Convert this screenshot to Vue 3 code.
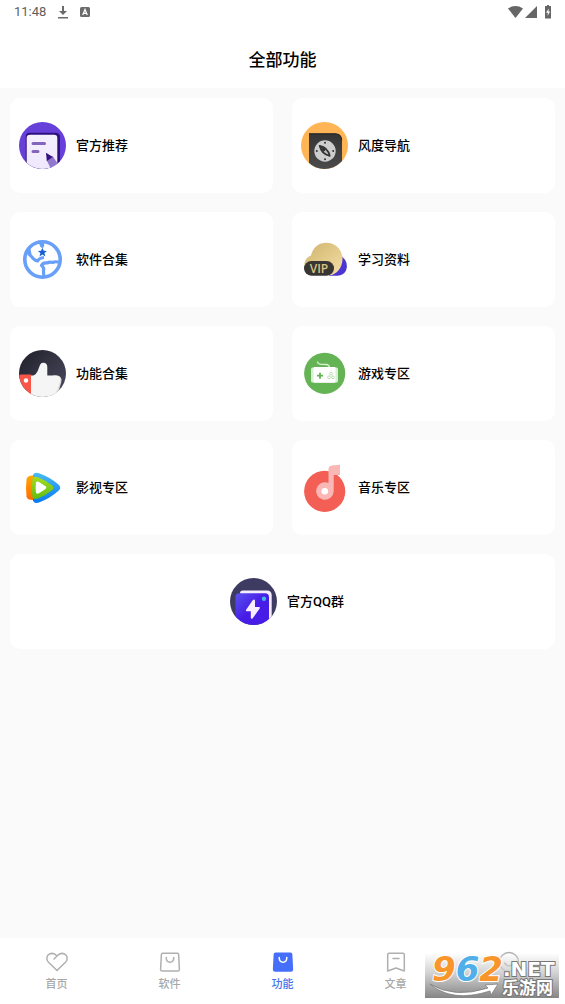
<template>
  <div class="page">
    <header class="header">
      <div class="status-bar">
        <div class="status-left">
          <span class="status-time">11:48</span>
          <svg class="status-icon" viewBox="0 0 12 14" width="12" height="14">
            <path d="M5 1h2v5h3L6 10 2 6h3z M1 12h10v1.5H1z" fill="#6b6b6b" />
          </svg>
          <svg class="status-icon" viewBox="0 0 10 10" width="10" height="10">
            <rect width="10" height="10" rx="1.5" fill="#6b6b6b" />
            <path d="M2.7 8 5 2.4 7.3 8M3.6 6.3h2.8" fill="none" stroke="#fff" stroke-width="1.2" />
          </svg>
        </div>
        <svg viewBox="0 0 44 14" width="44" height="14">
          <path d="M0 3.4Q7.5-1.4 15 3.4L7.5 13z" fill="#666" />
          <path d="M29 1v12H17z" fill="#666" />
          <path d="M37 1h2V0h2v1h2v12.5h-6V1z" fill="#666" />
          <path d="M40.800 3.500l-2.800 4.200h2l-.6 3.300 2.800-4.400h-1.800z" fill="#fff" />
        </svg>
      </div>
      <h1 class="title">全部功能</h1>
    </header>

    <main class="feature-grid">
      <button
        v-for="item in features"
        :key="item.icon"
        type="button"
        class="feature-card"
        :class="{ wide: item.wide }"
      >
        <svg v-if="item.icon === 'recommend'" class="feature-icon" viewBox="0 0 47 47">
          <defs>
            <clipPath id="round"><circle cx="23.5" cy="23.5" r="23.5" /></clipPath>
            <linearGradient id="note" x1="0" y1="0" x2="0" y2="1">
              <stop offset="0" stop-color="#f5f0ff" />
              <stop offset="1" stop-color="#efe8fd" />
            </linearGradient>
          </defs>
          <g clip-path="url(#round)">
            <rect width="47" height="47" fill="#6640d8" />
            <path d="M6.7 47V15q0-4.300 4.300-4.300h25.500q4.500 0 4.500 4.500V47z" fill="#2f107f" />
            <path d="M7.700 47V16q0-3.300 3.300-3.300h24q3.300 0 3.300 3.300V47z" fill="url(#note)" />
            <path d="M14 21.500h11.500M14 29.500h5" stroke="#8465bd" stroke-width="3" stroke-linecap="round" />
            <path d="M27.500 38l6-4 5.500 8-7 5z" fill="#9278cc" />
            <path d="M27 30.700l6.800 4.200-6 4z" fill="#351080" />
          </g>
        </svg>

        <svg v-else-if="item.icon === 'compass'" class="feature-icon" viewBox="0 0 47 47">
          <defs>
            <linearGradient id="dark" x1="0" y1="0" x2="0" y2="1">
              <stop offset="0" stop-color="#353535" />
              <stop offset="1" stop-color="#4b4b4b" />
            </linearGradient>
          </defs>
          <g clip-path="url(#round)">
            <rect width="47" height="47" fill="#ffb555" />
            <path d="M8 47V11.500h26q7 0 7 7V47z" fill="url(#dark)" />
            <path d="M8 11.800h26q6.700 0 6.700 6.700" fill="none" stroke="#242424" />
            <circle cx="24" cy="29" r="10.700" fill="#cdcdcd" />
            <g fill="#333">
              <circle cx="24" cy="20.800" r="1" />
              <circle cx="24" cy="37.200" r="1" />
              <circle cx="15.800" cy="29" r="1" />
              <circle cx="32.200" cy="29" r="1" />
            </g>
            <path d="M18.700 23.800q8 1.500 10 10-8-1.500-10-10z" fill="#bbb" stroke="#333" stroke-width="1.800" stroke-linejoin="round" />
            <path d="M19 24l6.500 3-3 3z" fill="#333" />
          </g>
        </svg>

        <svg v-else-if="item.icon === 'globe'" class="feature-icon" viewBox="0 0 47 47">
          <circle cx="23.500" cy="23.500" r="17.700" fill="#fff" stroke="#689ff8" stroke-width="3.600" />
          <path d="M8 14q2 5 4.500 6.500 2.500 4 6 4.500 1.500-3 6.500-3.500" fill="none" stroke="#689ff8" stroke-width="3.200" stroke-linejoin="round" />
          <path d="M13 8l-4 7 1.500 5 2-2-1-5z" fill="#689ff8" />
          <path d="M20 7h5q1 4-1.500 5-2.500 0-3.500-5z" fill="#689ff8" />
          <path d="M41 26.500q-5-1.500-7 0-3-1-6 .5-4-.5-5.500 2.500 3 2 2 5.500l.3 6" fill="none" stroke="#689ff8" stroke-width="3.200" stroke-linejoin="round" />
          <path d="M23.400 11.800l1.300 3 3.200.2-2.500 2.100.9 3.300-2.900-1.800-2.900 1.800.9-3.300-2.500-2.100 3.200-.2z" fill="#155fd5" />
        </svg>

        <svg v-else-if="item.icon === 'vip'" class="feature-icon" viewBox="0 0 47 47">
          <defs>
            <linearGradient id="gold" x1="0" y1="0" x2="1" y2="1">
              <stop offset="0" stop-color="#ceb36b" />
              <stop offset="1" stop-color="#f5dfa6" />
            </linearGradient>
          </defs>
          <path d="M28 39.700h8.500q6-.2 8.500-5.200 3-8-4-14z" fill="#4b36d3" />
          <path d="M9 39q-6-3-5.500-12 1-5.500 6.500-7.500C12 11 18 6.700 25.500 6.700c9 0 16 7.300 16 16 0 7.500-4 13.500-10.500 16.300z" fill="url(#gold)" />
          <rect x="3" y="25" width="30" height="14.700" rx="7.300" fill="#373632" />
          <text x="18" y="37" class="vip-text" text-anchor="middle">VIP</text>
        </svg>

        <svg v-else-if="item.icon === 'thumb'" class="feature-icon" viewBox="0 0 47 47">
          <defs>
            <linearGradient id="night" x1="0" y1="0" x2="1" y2="1">
              <stop offset="0" stop-color="#1e1f29" />
              <stop offset="1" stop-color="#4d4c61" />
            </linearGradient>
          </defs>
          <g clip-path="url(#round)">
            <rect width="47" height="47" fill="url(#night)" />
            <path d="M34 25.500h4.500q5 1 3.800 6.500L38 47H28z" fill="#dcdcdd" />
            <path d="M11.500 25.500h3q3-1.500 4.200-4.500l2.300-6q1-2.500 3.500-2.200 3.800.2 3.800 4.200v8.500H37q5.500 1 4 6.500-2 8-6.500 15h-23z" fill="#f5f5f6" />
            <path d="M0 47V26.500q0-2 2-2h10V47z" fill="#f75649" />
            <circle cx="7" cy="30.500" r="2.200" fill="#fff" />
          </g>
        </svg>

        <svg v-else-if="item.icon === 'game'" class="feature-icon" viewBox="0 0 47 47">
          <circle cx="23.700" cy="23.300" r="20.600" fill="#64b354" />
          <path d="M16.300 11.500q.5 2.800 4 2.800l5 .2q2.700.2 3 2.500" fill="none" stroke="#d8efd3" stroke-width="1.300" />
          <rect x="10" y="17.500" width="27" height="15" rx="1.500" fill="#d7efd2" />
          <rect x="12.500" y="17" width="22" height="15.700" rx="1" fill="#fff" />
          <path d="M19 22.700v6M16 25.700h6" stroke="#64b354" stroke-width="1.800" />
          <g fill="none" stroke="#b2dba9" stroke-width=".9">
            <circle cx="30" cy="23.700" r="1.400" />
            <circle cx="28" cy="27.300" r="1.400" />
            <circle cx="32" cy="27.300" r="1.400" />
          </g>
        </svg>

        <svg v-else-if="item.icon === 'video'" class="feature-icon" viewBox="0 0 47 47">
          <defs>
            <linearGradient id="orange" x1="0" y1="0" x2="0" y2="1">
              <stop offset="0" stop-color="#ffa800" />
              <stop offset="1" stop-color="#ff6c00" />
            </linearGradient>
            <linearGradient id="blue" x1="0" y1="0" x2="0" y2="1">
              <stop offset="0" stop-color="#4bbcf5" />
              <stop offset="1" stop-color="#0878ee" />
            </linearGradient>
            <linearGradient id="green" x1="0" y1="0" x2="0" y2="1">
              <stop offset="0" stop-color="#a5db20" />
              <stop offset="1" stop-color="#60bd12" />
            </linearGradient>
          </defs>
          <path d="M14 11.500q-6 0-6.500 4-1 8.500 0 17 .5 3.500 6.500 3.500z" fill="url(#orange)" />
          <path d="M14 11q1.500-3.500 6-1.800Q31 13 39.500 20.500q3.500 3.300 0 6.300Q31 34.500 20 38.500q-4.500 1.500-6-1.800z" fill="url(#blue)" />
          <path d="M13.500 14q2-2 5.500-.8 8 3 14.500 8.600 2 2 0 4Q27 31.500 19 34.500q-3.500 1.200-5.500-.8-1.500-9.700 0-19.700z" fill="url(#green)" />
          <path d="M17 18.500q1-1.500 3-.5l6.500 4.300q1.700 1.500 0 2.700L20 29.300q-2 1-3-.5-.7-5 0-10.300z" fill="#fff" />
        </svg>

        <svg v-else-if="item.icon === 'music'" class="feature-icon" viewBox="0 0 47 47">
          <circle cx="23.700" cy="27.300" r="20.600" fill="#f35e55" />
          <path d="M27.500 20V5q0-3 3-3.500L39 .7v10.200h-6.300v16.400A8.800 8.800 0 1 1 27.500 19z" fill="#f9b8b6" />
          <circle cx="23.800" cy="27.300" r="3.300" fill="#fff" />
        </svg>

        <svg v-else class="feature-icon" viewBox="0 0 47 47">
          <defs>
            <linearGradient id="violet" x1="0" y1="0" x2="1" y2="1">
              <stop offset="0" stop-color="#5954ef" />
              <stop offset=".5" stop-color="#471ce6" />
            </linearGradient>
          </defs>
          <g clip-path="url(#round)">
            <rect width="47" height="47" fill="#3e3b62" />
            <path d="M10 15q0-2.500 3-2.500h24q4.700 0 4.700 4.700V47H36z" fill="#f4edff" />
            <path d="M5.500 47V19q0-3.700 3.700-3.700H35q4 0 4 4V47z" fill="url(#violet)" />
            <path d="M22.500 22.500q2-2 2.500.2V29h4q1.500.3.500 1.800l-7 9.700q-1.500 1-1.700-.7v-6.500h-4q-1.500-.3-.5-1.800z" fill="#f6eeff" />
            <circle cx="34" cy="20.700" r="2.200" fill="#40b9df" />
          </g>
        </svg>

        <span class="feature-name">{{ item.name }}</span>
      </button>
    </main>

    <nav class="tab-bar">
      <a
        v-for="tab in tabs"
        :key="tab.name"
        href="#"
        class="tab"
        :class="{ active: tab.name === current }"
        @click.prevent="current = tab.name"
      >
        <svg class="tab-icon" viewBox="0 0 24 24">
          <path v-if="tab.icon === 'heart'" d="M12 20.500 3.300 12C.8 9.300 1.700 5.200 4.500 4c2.500-1.200 5.300-.5 7.500 2 2.200-2.500 5-3.200 7.500-2 2.800 1.200 3.700 5.300 1.200 8zM12 6 9 9" />
          <template v-else-if="tab.icon === 'bag'">
            <path class="bag" d="M4.500 3.200h15q1 0 1.100 1l.8 15.200q0 1.600-1.500 1.600H4.100q-1.500 0-1.500-1.600l.8-15.200q.1-1 1.100-1z" />
            <path class="bag-handle" d="M8.200 7.500q0 4.700 3.800 4.700t3.800-4.700" />
          </template>
          <path v-else-if="tab.icon === 'book'" d="M5 3.200h14q1.300 0 1.300 1.300V21L12 18l-8.300 3V4.500q0-1.300 1.300-1.300zM9 8.500h6" />
          <template v-else>
            <circle cx="12" cy="12" r="9.500" />
            <path d="M7.500 13q4.500 6 9 0" />
          </template>
        </svg>
        <span>{{ tab.name }}</span>
      </a>

      <div class="watermark">
        <svg class="watermark-logo" viewBox="0 0 134 45" width="134" height="45">
          <path d="M5 31q24 15 58 4l-3-3 13-1-7 11-1-4Q27 50 5 31z" fill="#fff" stroke="#777" stroke-width=".7" />
          <text x="7" y="28" class="mark-number"><tspan class="mark-orange">9</tspan><tspan class="mark-blue">6</tspan><tspan class="mark-orange">2</tspan></text>
          <text x="78" y="23" class="mark-domain">.NET</text>
          <text x="77" y="41" class="mark-name">乐游网</text>
        </svg>
      </div>
    </nav>
  </div>
</template>

<script setup>
import { ref } from 'vue'

const features = [
  { name: '官方推荐', icon: 'recommend' },
  { name: '风度导航', icon: 'compass' },
  { name: '软件合集', icon: 'globe' },
  { name: '学习资料', icon: 'vip' },
  { name: '功能合集', icon: 'thumb' },
  { name: '游戏专区', icon: 'game' },
  { name: '影视专区', icon: 'video' },
  { name: '音乐专区', icon: 'music' },
  { name: '官方QQ群', icon: 'group', wide: true }
]

const tabs = [
  { name: '首页', icon: 'heart' },
  { name: '软件', icon: 'bag' },
  { name: '功能', icon: 'bag' },
  { name: '文章', icon: 'book' },
  { name: '我的', icon: 'user' }
]

// 当前选中的标签
const current = ref('功能')
</script>

<style>
body {
  margin: 0;
  background: #fafafa;
}
</style>

<style scoped>
.page {
  display: flex;
  flex-direction: column;
  min-height: 100vh;
  background: #fafafa;
  color: #000;
  font-family: Roboto, 'Noto Sans CJK SC', sans-serif;
}

.header {
  background: #fff;
}

.status-bar {
  display: flex;
  align-items: center;
  justify-content: space-between;
  height: 24px;
  padding: 0 13px 0 14px;
}

.status-left {
  display: flex;
  align-items: center;
}

.status-time {
  color: #606060;
  font-size: 13px;
  line-height: 20px;
}

.status-icon {
  margin-left: 11px;
}

.title {
  margin: 0;
  padding: 24px 0 16px;
  font-size: 17px;
  font-weight: 500;
  line-height: 24px;
  text-align: center;
}

.feature-grid {
  display: grid;
  grid-template-columns: 1fr 1fr;
  gap: 19px;
  padding: 10px;
}

.feature-card {
  display: flex;
  align-items: center;
  gap: 10px;
  height: 95px;
  padding: 0 0 0 9px;
  border: none;
  border-radius: 10px;
  background: #fff;
  color: #000;
  font: inherit;
  cursor: pointer;
}

.feature-card.wide {
  grid-column: 1 / -1;
  justify-content: center;
}

.feature-icon {
  flex: none;
  width: 47px;
  height: 47px;
  overflow: visible;
}

.feature-name {
  font-size: 13px;
  font-weight: 500;
  line-height: 20px;
}

.vip-text {
  fill: #dcc283;
  font-family: 'Open Sans', sans-serif;
  font-size: 12px;
  font-weight: 600;
}

.tab-bar {
  position: relative;
  display: flex;
  margin-top: auto;
  background: #fff;
}

.tab {
  display: flex;
  flex: 1;
  flex-direction: column;
  align-items: center;
  height: 54px;
  padding-top: 12px;
  color: #a8a8a8;
  font-size: 11px;
  font-weight: 500;
  line-height: 22px;
  text-decoration: none;
}

.tab-icon {
  width: 24px;
  height: 24px;
  fill: none;
  stroke: #b0b0b0;
  stroke-width: 1.5;
  stroke-linecap: round;
  stroke-linejoin: round;
}

.tab.active {
  color: #4473e8;
}

.tab.active .bag {
  fill: #456ffa;
  stroke: #456ffa;
}

.tab.active .bag-handle {
  stroke: #fff;
}

/* 右下角水印 */
.watermark {
  position: absolute;
  right: 6px;
  bottom: 6px;
  height: 45px;
  background: linear-gradient(rgba(255, 255, 255, 0.1), rgba(205, 205, 205, 0.9) 45%, #858585);
}

.watermark-logo {
  overflow: visible;
}

.mark-number {
  font-family: 'DejaVu Sans', sans-serif;
  font-size: 34px;
  font-style: italic;
  font-weight: 700;
  stroke: #fff;
  stroke-width: 2;
  paint-order: stroke;
}

.mark-orange {
  fill: #f8962b;
}

.mark-blue {
  fill: #50aee8;
}

.mark-domain,
.mark-name {
  fill: #fff;
  stroke: #777;
  stroke-width: 2;
  paint-order: stroke;
  font-weight: 700;
}

.mark-domain {
  font-family: 'DejaVu Sans', sans-serif;
  font-size: 20px;
}

.mark-name {
  font-size: 17px;
}
</style>
